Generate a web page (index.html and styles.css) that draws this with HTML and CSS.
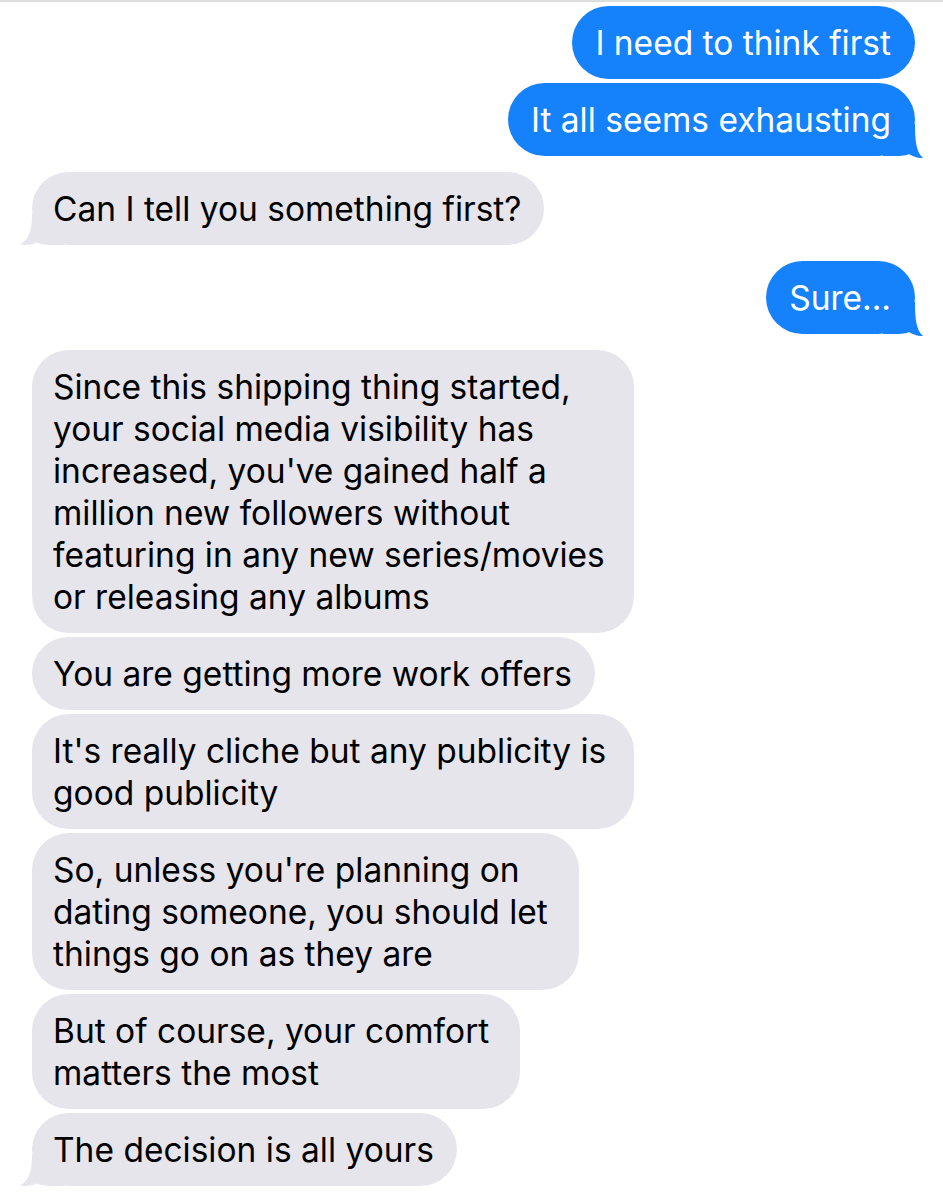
FILE: index.html
```html
<!DOCTYPE html>
<html lang="en">
<head>
    <meta charset="UTF-8">
    <meta name="viewport" content="width=device-width, initial-scale=1.0">
    <title>Messages</title>
    <link rel="stylesheet" href="styles.css">
</head>
<body>

    <!-- Conversation -->
    <div class="thread">
        <div class="msg sent">I need to think first</div>
        <div class="msg sent tail">It all seems exhausting
            <svg class="tail-shape" viewBox="0 0 42 34"><path d="M0 0H32C32 16 33 28 40 34C35 34.5 30 32.5 26 30C22 32 16 32 8 32H0Z"/></svg>
        </div>

        <div class="msg received tail">Can I tell you something first?
            <svg class="tail-shape" viewBox="0 0 46 34"><path d="M46 0H14C14 16 12 26 2 31.5C8 32.5 14 31.5 19 29.5C23 31.5 30 32 38 32H46Z"/></svg>
        </div>

        <div class="msg sent tail">Sure...
            <svg class="tail-shape" viewBox="0 0 42 34"><path d="M0 0H32C32 16 33 28 40 34C35 34.5 30 32.5 26 30C22 32 16 32 8 32H0Z"/></svg>
        </div>

        <div class="msg received wide">Since this shipping thing started,<br>your social media visibility has<br>increased, you've gained half a<br>million new followers without<br>featuring in any new series/movies<br>or releasing any albums</div>
        <div class="msg received">You are getting more work offers</div>
        <div class="msg received wide">It's really cliche but any publicity is<br>good publicity</div>
        <div class="msg received multi">So, unless you're planning on<br>dating someone, you should let<br>things go on as they are</div>
        <div class="msg received multi">But of course, your comfort<br>matters the most</div>
        <div class="msg received tail">The decision is all yours
            <svg class="tail-shape" viewBox="0 0 46 34"><path d="M46 0H14C14 16 12 26 2 31.5C8 32.5 14 31.5 19 29.5C23 31.5 30 32 38 32H46Z"/></svg>
        </div>
    </div>

</body>
</html>
```
FILE: styles.css
```css
body {
    margin: 0;
    background: #fff;
    font-family: "Inter", "Liberation Sans", sans-serif;
}
.thread {
    display: flex;
    flex-direction: column;
    align-items: flex-start;
    border-top: 2px solid #dedede;
    padding: 4px 0 20px;
}
.msg {
    position: relative;
    z-index: 0;
    box-sizing: border-box;
    font-size: 33.5px;
    line-height: 42px;
    white-space: nowrap;
    padding: 16px 23px 15px 21px;
    border-radius: 37px;
}
.msg + .msg {
    margin-top: 4px;
}
.msg.tail + .msg {
    margin-top: 16px;
}
.sent {
    align-self: flex-end;
    margin-right: 28px;
    padding-left: 23px;
    padding-right: 24px;
    background: #1582fb;
    color: #fff;
}
.received {
    margin-left: 32px;
    background: #e6e5eb;
    color: #000;
}
.wide {
    width: 602px;
}
.multi {
    padding-right: 31px;
}
.tail-shape {
    position: absolute;
    z-index: -1;
    bottom: -2px;
    height: 34px;
}
.sent .tail-shape {
    right: -10px;
    width: 42px;
    fill: #1582fb;
}
.received .tail-shape {
    left: -14px;
    width: 46px;
    fill: #e6e5eb;
}
```
